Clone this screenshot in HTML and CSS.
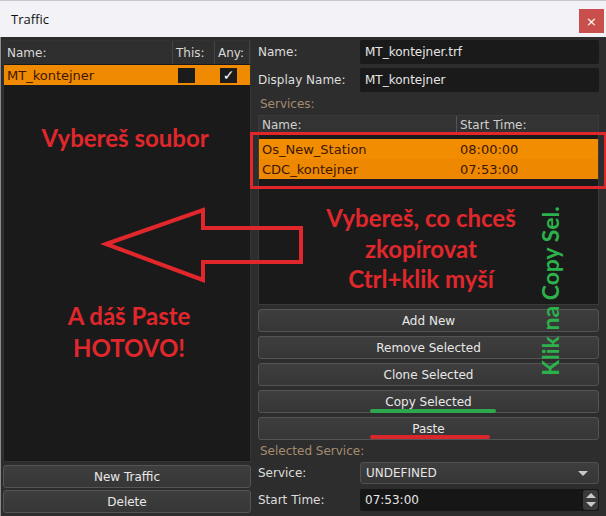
FILE: index.html
```html
<!DOCTYPE html>
<html>
<head>
    <link rel="stylesheet" href="styles.css">
</head>
<body>
<div class="window">
    <div class="titlebar">
        <span class="title">Traffic</span>
        <span class="close">×</span>
    </div>
    <div class="main">
        <div class="left">
            <div class="list">
                <div class="list-head">
                    <div class="col-name">Name:</div>
                    <div class="col-this">This:</div>
                    <div class="col-any">Any:</div>
                </div>
                <div class="list-row selected">
                    <div class="col-name">MT_kontejner</div>
                    <div class="col-this"><span class="check"></span></div>
                    <div class="col-any"><span class="check">✓</span></div>
                </div>
            </div>
            <button class="btn">New Traffic</button>
            <button class="btn last">Delete</button>
        </div>

        <div class="right">
            <div class="field">
                <label>Name:</label>
                <div class="input">MT_kontejner.trf</div>
            </div>
            <div class="field">
                <label>Display Name:</label>
                <div class="input">MT_kontejner</div>
            </div>
            <div class="section">Services:</div>
            <div class="table">
                <div class="table-head">
                    <div class="t-name">Name:</div>
                    <div class="t-time">Start Time:</div>
                </div>
                <div class="table-body">
                    <div class="table-row">
                        <div class="t-name">Os_New_Station</div>
                        <div class="t-time">08:00:00</div>
                    </div>
                    <div class="table-row second">
                        <div class="t-name">CDC_kontejner</div>
                        <div class="t-time">07:53:00</div>
                    </div>
                </div>
            </div>
            <div class="actions">
                <button class="btn">Add New</button>
                <button class="btn">Remove Selected</button>
                <button class="btn">Clone Selected</button>
                <button class="btn">Copy Selected</button>
                <button class="btn">Paste</button>
            </div>
            <div class="section selected-label">Selected Service:</div>
            <div class="field small">
                <label>Service:</label>
                <div class="combo">UNDEFINED<span class="arrow"></span></div>
            </div>
            <div class="field small spaced">
                <label>Start Time:</label>
                <div class="input spin">07:53:00
                    <span class="spinner"><span class="up"></span><span class="down"></span></span>
                </div>
            </div>
        </div>
    </div>

    <!-- annotations drawn over the screenshot -->
    <div class="red-box"></div>
    <svg class="big-arrow" width="606" height="516" viewBox="0 0 606 516">
        <polygon points="106,244 203,210 203,228 301,228 301,262 203,262 203,280"
                 fill="none" stroke="#e2272c" stroke-width="4" stroke-linejoin="miter"/>
    </svg>
    <div class="note note-file">Vybereš soubor</div>
    <div class="note note-copy">Vybereš, co chceš<br>zkopírovat<br>Ctrl+klik myší</div>
    <div class="note note-paste">A dáš Paste<br>HOTOVO!</div>
    <div class="note-green">Klik na Copy Sel.</div>
    <div class="mark mark-green"></div>
    <div class="mark mark-red"></div>
</div>
</body>
</html>
```

FILE: styles.css
```css
* {
    box-sizing: border-box;
}
body {
    margin: 0;
    font-family: "DejaVu Sans", sans-serif;
    font-size: 12px;
    background: #2d2d2d;
}
.window {
    position: relative;
    width: 606px;
    height: 516px;
    overflow: hidden;
    background: #2d2d2d;
}
.titlebar {
    height: 37px;
    background: #f2f2f7;
    border-top: 1px solid #c8c8cc;
    display: flex;
    align-items: center;
    justify-content: space-between;
    padding-left: 11px;
    padding-right: 2px;
}
.title {
    font-family: "Open Sans", sans-serif;
    font-size: 13px;
    color: #111;
}
.close {
    width: 25px;
    height: 24px;
    margin-top: 4px;
    background: #c94f4c;
    color: #fff;
    font-family: "DejaVu Sans", sans-serif;
    font-size: 13px;
    display: flex;
    align-items: center;
    justify-content: center;
}
.main {
    display: flex;
    height: 479px;
    padding: 3px 7px 3px 2px;
    border-left: 1px solid #8d8d8d;
    gap: 7px;
}
.left {
    width: 248px;
    display: flex;
    flex-direction: column;
}
.list {
    flex: 1;
    background: #1b1a1b;
    border: 1px solid #333;
    margin-bottom: 3px;
}
.list-head {
    display: flex;
    height: 23px;
    background: #2f2f2f;
    color: #d8d8d8;
    align-items: stretch;
}
.list-head > div {
    display: flex;
    align-items: center;
    padding-left: 3px;
    border-right: 1px solid #444;
}
.col-name {
    width: 169px;
}
.col-this {
    width: 42px;
}
.col-any {
    flex: 1;
}
.list-row {
    display: flex;
    height: 20px;
    margin-top: 1px;
    align-items: center;
    font-size: 13px;
}
.list-row.selected {
    background: #f08a00;
    color: #3c1600;
}
.list-row .col-name {
    padding-left: 3px;
}
.list-row .col-this, .list-row .col-any {
    display: flex;
    padding-left: 5px;
}
.check {
    width: 17px;
    height: 15px;
    background: #1c1b1c;
    color: #fff;
    font-size: 14px;
    font-weight: bold;
    line-height: 15px;
    text-align: center;
}
.btn {
    height: 23px;
    width: 100%;
    margin: 0 0 2px 0;
    padding: 0;
    background: linear-gradient(#3e3e3e, #363636);
    border: 1px solid #545454;
    border-radius: 3px;
    color: #e8e8e8;
    font-family: "DejaVu Sans", sans-serif;
    font-size: 12px;
}
.btn.last {
    margin-bottom: 0;
}
.right {
    flex: 1;
    display: flex;
    flex-direction: column;
}
.field {
    display: flex;
    height: 24px;
    margin-bottom: 4px;
    align-items: center;
}
.field label {
    width: 102px;
    color: #dedede;
    font-size: 12px;
}
.input {
    flex: 1;
    height: 100%;
    background: #1a1a1a;
    border-radius: 2px;
    color: #e6e6e6;
    display: flex;
    align-items: center;
    padding-left: 5px;
    font-size: 12px;
}
.section {
    color: #a48c70;
    height: 18px;
    margin-top: -1px;
    padding-left: 2px;
    display: flex;
    align-items: center;
}
.table {
    height: 190px;
    margin-top: 2px;
    background: #1b1a1b;
    border: 1px solid #3a3a3a;
}
.table-head {
    display: flex;
    height: 18px;
    background: #333;
    color: #cfcfcf;
}
.table-head > div {
    display: flex;
    align-items: center;
    padding-left: 3px;
}
.table-head .t-name {
    border-right: 1px solid #555;
}
.t-name {
    width: 198px;
}
.t-time {
    flex: 1;
}
.table-body {
    padding-top: 5px;
}
.table-row {
    display: flex;
    height: 20px;
    align-items: center;
    background: #f28c00;
    color: #3b1700;
    font-size: 13px;
}
.table-row.second {
    background: #ee8800;
}
.table-row > div {
    padding-left: 3px;
}
.actions {
    display: flex;
    flex-direction: column;
    gap: 4px;
    margin-top: 4px;
}
.actions .btn {
    margin: 0;
}
.selected-label {
    margin-top: 2px;
}
.field.small {
    height: 22px;
    margin-top: 2px;
    margin-bottom: 0;
}
.field.spaced {
    margin-top: 5px;
}
.combo {
    flex: 1;
    height: 100%;
    background: linear-gradient(#3e3e3e, #363636);
    border: 1px solid #505050;
    border-radius: 3px;
    color: #e6e6e6;
    display: flex;
    align-items: center;
    justify-content: space-between;
    padding: 0 10px 0 5px;
}
.arrow {
    width: 0;
    height: 0;
    border-left: 5px solid transparent;
    border-right: 5px solid transparent;
    border-top: 5px solid #c8c8c8;
}
.input.spin {
    position: relative;
    background: #161616;
}
.spinner {
    position: absolute;
    right: 1px;
    top: 1px;
    bottom: 1px;
    width: 15px;
    background: #3a3a3a;
    border-radius: 3px;
    display: flex;
    flex-direction: column;
    align-items: center;
    justify-content: space-evenly;
}
.up, .down {
    width: 0;
    height: 0;
    border-left: 5px solid transparent;
    border-right: 5px solid transparent;
}
.up {
    border-bottom: 5px solid #c8c8c8;
}
.down {
    border-top: 5px solid #c8c8c8;
}

/* annotation layer */
.red-box {
    position: absolute;
    left: 250px;
    top: 132px;
    width: 356px;
    height: 57px;
    border: 3px solid #e2272c;
    border-right-width: 2px;
}
.big-arrow {
    position: absolute;
    left: 0;
    top: 0;
}
.note {
    position: absolute;
    font-family: Lato, sans-serif;
    font-weight: bold;
    font-size: 24px;
    color: #e0272c;
    text-align: center;
    white-space: nowrap;
}
.note-file {
    left: 25px;
    width: 200px;
    top: 124px;
    line-height: 28px;
}
.note-copy {
    left: 321px;
    width: 200px;
    top: 203px;
    line-height: 30.5px;
}
.note-paste {
    left: 29px;
    width: 200px;
    top: 300px;
    line-height: 32px;
}
.note-green {
    position: absolute;
    left: 450px;
    top: 278px;
    width: 200px;
    height: 26px;
    line-height: 26px;
    transform: rotate(-90deg);
    font-family: Lato, sans-serif;
    font-weight: bold;
    font-size: 23px;
    color: #2bb24b;
    text-align: center;
    white-space: nowrap;
}
.mark {
    position: absolute;
    border-radius: 3px;
}
.mark-green {
    left: 370px;
    top: 409px;
    width: 126px;
    height: 4px;
    background: #2ea84d;
}
.mark-red {
    left: 370px;
    top: 435px;
    width: 120px;
    height: 4px;
    background: #d9262b;
}
```
